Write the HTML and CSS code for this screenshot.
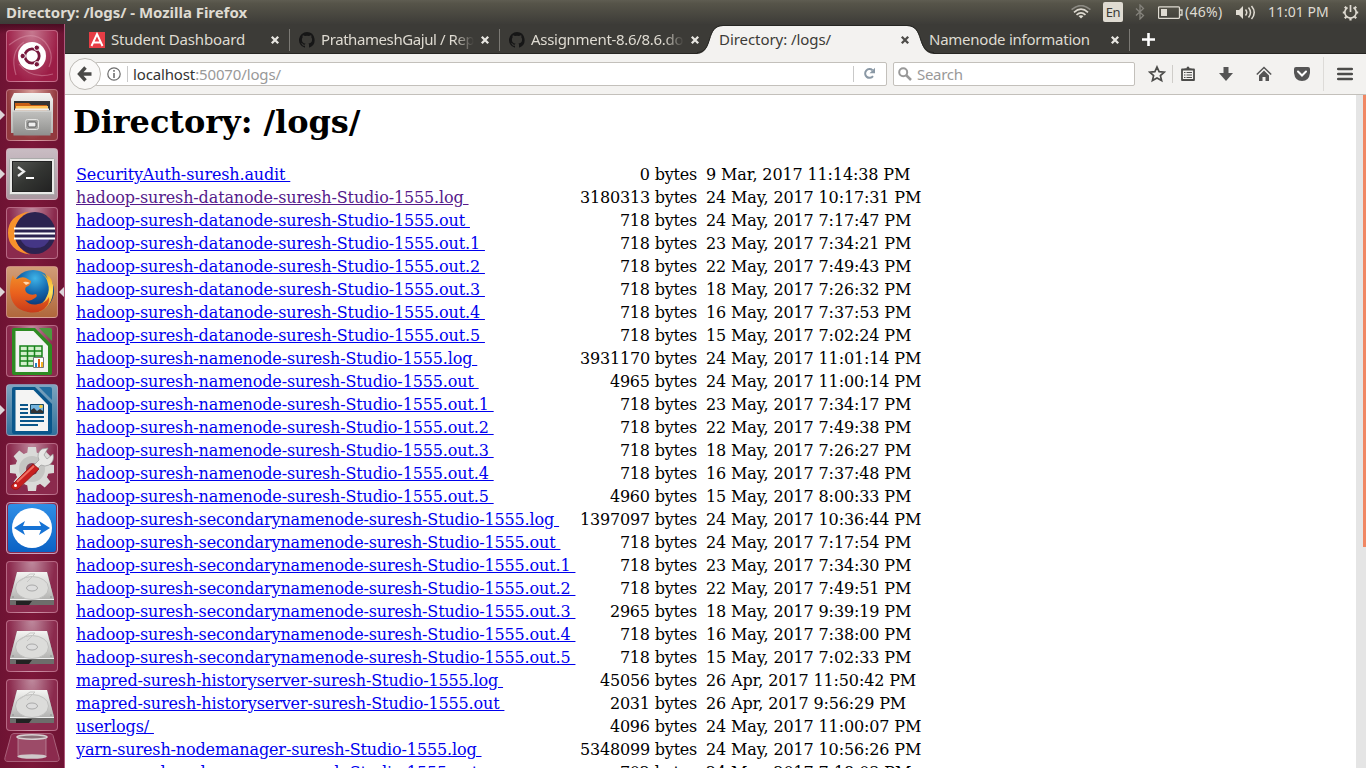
FILE: index.html
```html
<!DOCTYPE html>
<html lang="en">
<head>
<meta charset="utf-8">
<title>Directory: /logs/</title>
<link rel="stylesheet" href="styles.css">
</head>
<body>
<svg class="defs" width="0" height="0">
  <defs>
    <linearGradient id="metal" x1="0" y1="0" x2="0" y2="1"><stop offset="0" stop-color="#f4f4f2"/><stop offset="1" stop-color="#b4b4b2"/></linearGradient>
    <linearGradient id="plate" x1="0" y1="0" x2="0" y2="1"><stop offset="0" stop-color="#c2c2c0"/><stop offset="1" stop-color="#8f8f8d"/></linearGradient>
    <linearGradient id="dark" x1="0" y1="0" x2="1" y2="1"><stop offset="0" stop-color="#555753"/><stop offset=".5" stop-color="#333532"/><stop offset="1" stop-color="#222"/></linearGradient>
    <linearGradient id="blue" x1="0" y1="0" x2="0" y2="1"><stop offset="0" stop-color="#2f8ee6"/><stop offset="1" stop-color="#0b62c4"/></linearGradient>
    <radialGradient id="globe" cx=".55" cy=".2" r=".7"><stop offset="0" stop-color="#3fb4e8"/><stop offset=".5" stop-color="#1467ad"/><stop offset="1" stop-color="#0c2f6c"/></radialGradient>
    <linearGradient id="fox" x1="0" y1="0" x2="0" y2="1"><stop offset="0" stop-color="#f08c28"/><stop offset=".5" stop-color="#e9601d"/><stop offset="1" stop-color="#c73a1a"/></linearGradient>
    <linearGradient id="flame" x1="0" y1="0" x2="0" y2="1"><stop offset="0" stop-color="#f49b20"/><stop offset=".5" stop-color="#ffe45c"/><stop offset="1" stop-color="#ee8420"/></linearGradient>
    <symbol id="cat" viewBox="0 0 16 16"><path d="M8 0a8 8 0 0 0-2.500 15.600c.4.1.5-.2.5-.4v-1.500c-2.200.5-2.700-1-2.700-1-.4-.9-.9-1.200-.9-1.200-.7-.5.1-.5.1-.5.8.1 1.200.8 1.200.8.7 1.300 1.900.9 2.300.7.1-.5.3-.9.5-1.100-1.800-.2-3.600-.9-3.600-4 0-.9.3-1.600.8-2.100-.1-.2-.4-1 .1-2.100 0 0 .7-.2 2.200.8a7.500 7.500 0 0 1 4 0c1.500-1 2.200-.8 2.200-.8.4 1.100.2 1.900.1 2.100.5.600.8 1.300.8 2.100 0 3.100-1.900 3.700-3.700 3.900.3.300.6.800.6 1.500v2.200c0 .2.100.5.600.4A8 8 0 0 0 8 0z" fill="#161616"/></symbol>
    <symbol id="close" viewBox="0 0 10 10"><path d="M1.800 1.800l6.400 6.400M8.200 1.800L1.800 8.200" stroke="currentColor" stroke-width="2.300"/></symbol>
    <symbol id="disk" viewBox="0 0 52 52">
      <path d="M11 11H41L48 38V44H4V38z" fill="#777"/><path d="M11 11H41L48 38H4z" fill="url(#metal)"/>
      <path d="M4 38.500h44V44H4z" fill="#6d6d6b"/><path d="M10 40h16l-3 4H10z" fill="#222"/><path d="M4 38.500h44" stroke="#eee"/>
      <ellipse cx="26" cy="27" rx="16.500" ry="11.500" fill="#dcdcda" stroke="#b9b9b7" stroke-width=".8"/>
      <path d="M14 20l10-7h5l-8 8" fill="none" stroke="#c6c6c4"/><ellipse cx="26" cy="27" rx="5.500" ry="3" fill="#ddd" stroke="#aaa"/>
      <g fill="#888"><circle cx="7" cy="36" r=".8"/><circle cx="45" cy="36" r=".8"/></g>
    </symbol>
  </defs>
</svg>

<header class="panel">
  <span class="panel-title">Directory: /logs/ - Mozilla Firefox</span>
  <div class="indicators">
    <svg class="wifi" width="20" height="14" viewBox="0 0 20 14" fill="none" stroke="#dfdbd2"><path d="M.6 4.700Q10-3.500 19.400 4.700" stroke="#8b8982" stroke-width="1.600"/><path d="M3 7.300Q10 1 17 7.300" stroke-width="1.700"/><path d="M5.500 9.900Q10 5.800 14.500 9.900" stroke-width="1.700"/><path d="M7.500 11q2.500-1.500 5 0L10 13.500z" fill="#dfdbd2" stroke="none"/></svg>
    <span class="lang">En</span>
    <svg class="bt" width="10" height="16" viewBox="0 0 10 16"><path d="M1 4.500l7.500 7L5 15V1l3.500 3.500L1 11.500" fill="none" stroke="#85837c" stroke-width="1.300"/></svg>
    <svg class="battery" width="25" height="13" viewBox="0 0 25 13"><path d="M1.500 .8h19q1 0 1 1v9.500q0 1-1 1h-19q-1 0-1-1V1.800q0-1 1-1zM22 4h2v5h-2" fill="none" stroke="#dfdbd2" stroke-width="1.300"/><path d="M3 3h6v7H3z" fill="#dfdbd2"/></svg>
    <span class="percent">(46%)</span>
    <svg class="sound" width="21" height="15" viewBox="0 0 21 15"><path d="M1 5h3l4-4v13l-4-4H1z" fill="#dfdbd2"/><path d="M10.500 4.500q2.500 3 0 6M13.500 2.500q4 5 0 10M16.500 1q5.500 6.500 0 13" fill="none" stroke="#dfdbd2" stroke-width="1.500"/></svg>
    <span class="clock">11:01 PM</span>
    <svg class="power" width="17" height="17" viewBox="0 0 17 17" fill="none" stroke="#dfdbd2"><path d="M5.500 3.500a5.700 5.700 0 1 0 6 0" stroke-width="1.700"/><path d="M8.500 1v7" stroke-width="1.700"/><path d="M.8 8.500h2M14.200 8.500h2M8.500 14.200v2.200M2.800 14.200l1.500-1.500M14.200 14.200l-1.500-1.500M2.800 2.800l1.500 1.500M14.200 2.800l-1.500 1.500" stroke-width="2.200"/></svg>
  </div>
</header>

<div class="desktop">
  <aside class="launcher">
    <div class="tile dash"><svg viewBox="0 0 52 52"><g fill="none" stroke="#e2a0b4" stroke-opacity=".45" stroke-width="1.200"><path d="M3 15Q25-2 39 12Q49 24 43 37"/><path d="M10 45Q3 22 18 12"/><path d="M13 34Q25 50 47 44"/></g><circle cx="26" cy="26" r="14" fill="#fff"/><circle cx="26" cy="26" r="7.200" fill="none" stroke="#77173c" stroke-width="2.800"/><g fill="#77173c" stroke="#fff" stroke-width="1"><circle cx="16.700" cy="26" r="2.700"/><circle cx="30.800" cy="17.700" r="2.700"/><circle cx="30.800" cy="34.300" r="2.700"/></g></svg></div>
    <div class="tile files running"><svg viewBox="0 0 52 52"><path d="M8 4h36l3 6v34H5V10z" fill="url(#metal)"/><path d="M8 12h36v12H8z" fill="#333"/><path d="M9 14h14l2 2h16v8H9z" fill="#c95f14"/><path d="M10 17h32v3H10z" fill="#ffc45b"/><path d="M9 19.500h34v2H9z" fill="#eee"/><path d="M6.500 21.500h39l-1 25h-37z" fill="url(#plate)"/><path d="M6.500 22h39" stroke="#e0e0de"/><rect x="19.500" y="30.500" width="13" height="10" rx="2" fill="#a5a5a3" stroke="#e4e4e2"/><rect x="22" y="33" width="8" height="5" rx="1" fill="#eee" stroke="#555"/></svg></div>
    <div class="tile term running"><svg viewBox="0 0 52 52"><rect x="3.500" y="10.500" width="45" height="36" rx="1" fill="#e9e9e7" stroke="#aaa"/><rect x="6.500" y="13.500" width="39" height="30" fill="url(#dark)" stroke="#222"/><path d="M12 19l6 4.500-6 4.500" fill="none" stroke="#eee" stroke-width="2.200"/><path d="M20 30h8" stroke="#fff" stroke-width="2"/></svg></div>
    <div class="tile"><svg viewBox="0 0 52 52"><path d="M24 4.500Q2 8 2 26T24 47.500Q9 41 9 26T24 4.500z" fill="#f7922b"/><ellipse cx="29" cy="26" rx="20.500" ry="21" fill="#2c2350"/><path d="M14 31h30q-3 10-15 10T14 31z" fill="#443685"/><path d="M8 21.500h41M8 26.500h41M8 31.500h41" stroke="#fff" stroke-width="2.200"/></svg></div>
    <div class="tile firefox running active"><svg viewBox="0 0 52 52"><circle cx="27" cy="25" r="21" fill="url(#globe)"/><path d="M33 6q8 4 9 12 2 6-1 12-3 8-12 11l4 5q14-6 14-22Q48 12 39 8l3 5Q38 8 33 6z" fill="url(#flame)"/><path d="M7 9q1 4 4 4 5-3 9-1l5 3q0 4-5 6-2 3 1 6 4 3 9 1 2 2-1 4-5 4-10 2 5 6 13 4 8-1 11-7 1 7-5 12-7 5-16 3Q5 43 4 25 4 15 7 9z" fill="url(#fox)"/><path d="M17 16q4-1 7 1l-4 2z" fill="#ffd7ac"/></svg></div>
    <div class="tile"><svg viewBox="0 0 52 52"><path d="M8 3h21l17 17v28q0 2-2 2H8q-2 0-2-2V5q0-2 2-2z" fill="#2e8b22"/><path d="M33 3h11q2 0 2 2v11z" fill="#4c9a3f"/><path d="M9.500 6h18L42 21v26H9.500z" fill="#f4f4f3"/><path d="M14 21h22v20H14zM14 26h22M14 31h22M14 36h22M21.500 21v20M28.500 21v20" fill="#d3f0cc" stroke="#18831b" stroke-width="1.500"/><path d="M27.500 32.500h10v10h-10z" fill="#fff" stroke="#777"/><path d="M29 38h2v4h-2z" fill="#2583c5"/><path d="M32 34h2v8h-2z" fill="#e45b15"/><path d="M35 37h2v5h-2z" fill="#f5b223"/></svg></div>
    <div class="tile writer running"><svg viewBox="0 0 52 52"><path d="M8 3h21l17 17v28q0 2-2 2H8q-2 0-2-2V5q0-2 2-2z" fill="#09568b"/><path d="M33 3h11q2 0 2 2v11z" fill="#236e9f"/><path d="M9.500 6h18L42 21v26H9.500z" fill="#f4f4f3"/><path d="M14 21h8M14 25h8M14 29h8M14 33h24M14 37h24M14 41h18" stroke="#0b568a" stroke-width="2"/><path d="M24.500 20.500h13v9h-13z" fill="#72b4df" stroke="#124969"/><circle cx="35" cy="22.500" r="1.800" fill="#f5ce47"/><path d="M25 29v-3l3-2 3 3 3-2 3 2v2z" fill="#333"/></svg></div>
    <div class="tile"><svg viewBox="0 0 52 52"><g transform="translate(26 26)" fill="#dadad8"><circle r="17"/><path d="M-4-22h8l1 8H-5zM-4 22h8l1-8H-5z"/><path d="M-4-22h8l1 8H-5zM-4 22h8l1-8H-5z" transform="rotate(45)"/><path d="M-4-22h8l1 8H-5zM-4 22h8l1-8H-5z" transform="rotate(90)"/><path d="M-4-22h8l1 8H-5zM-4 22h8l1-8H-5z" transform="rotate(135)"/><circle r="13" fill="#c5c5c3"/><circle r="6" fill="#804056"/></g><path d="M28 22l5-5q-3-7 3-11l6-1-4 7 3 4 6-5q2 7-4 11-4 2-8 0l-4 4z" fill="#e7e7e5" stroke="#999" stroke-width=".7"/><path d="M27 21l6 5-21 20q-5 2-7-3z" fill="#c82020" stroke="#951414" stroke-width=".8"/><path d="M11 39l17-16" stroke="#f07063" stroke-width="1.800"/><circle cx="9.500" cy="42.500" r="1.500" fill="#fff"/></svg></div>
    <div class="tile viewer"><svg viewBox="0 0 52 52"><rect x="2" y="2" width="48" height="48" rx="3" fill="url(#blue)"/><circle cx="26" cy="26" r="20" fill="#fff"/><path d="M8 26l11-7-2 5h18l-2-5 11 7-11 7 2-5H17l2 5z" fill="#1673d5"/></svg></div>
    <div class="tile"><svg viewBox="0 0 52 52"><use href="#disk"/></svg></div>
    <div class="tile"><svg viewBox="0 0 52 52"><use href="#disk"/></svg></div>
    <div class="tile"><svg viewBox="0 0 52 52"><use href="#disk"/></svg></div>
    <svg class="trash" width="56" height="29" viewBox="0 0 56 29"><path d="M10 .5h36q2 0 3 2l6 22q1 4-3 4H4q-4 0-3-4L7 2.500q1-2 3-2z" fill="#8b2a4d" stroke="#a9607a"/><path d="M14 4h28v20H14z" fill="#a8627c" opacity=".6"/><path d="M14 4v20M42 4v20" stroke="#c295a5" opacity=".7"/><ellipse cx="28" cy="23.500" rx="14.500" ry="2.300" fill="#cfc9ca"/><ellipse cx="28" cy="4" rx="15" ry="2.200" fill="#8c7079" stroke="#d8d2d3" stroke-width="1.500"/></svg>
  </aside>

  <main class="browser">
    <nav class="tabs">
      <div class="tab"><svg class="fav" viewBox="0 0 16 16"><path d="M0 0h16v16H0z" fill="#e73d45"/><path d="M2.500 14L8 2l5.500 12M4.500 10.500h7" fill="none" stroke="#fff" stroke-width="1.900"/></svg><span class="label l1">Student Dashboard</span><svg class="x"><use href="#close"/></svg></div>
      <div class="tab"><svg class="fav"><use href="#cat"/></svg><span class="label fade l2">PrathameshGajul / Rep</span><svg class="x"><use href="#close"/></svg></div>
      <div class="tab plain"><svg class="fav"><use href="#cat"/></svg><span class="label fade l3">Assignment-8.6/8.6.do</span><svg class="x"><use href="#close"/></svg></div>
      <div class="tab selected"><svg class="shape" width="240" height="29" viewBox="0 0 240 29"><path d="M0 29C17 28 8 1 26 1H210C228 1 219 28 237 29z" fill="#f3f2f0"/><path d="M0 27.500C17 27.500 8 .5 26 .5H210C228 .5 219 27.500 237 27.500" fill="none" stroke="#252522"/></svg><span class="label l4">Directory: /logs/</span><svg class="x"><use href="#close"/></svg></div>
      <div class="tab"><span class="label l5">Namenode information</span><svg class="x"><use href="#close"/></svg></div>
      <svg class="plus" width="13" height="13" viewBox="0 0 13 13"><path d="M6.500 0v13M0 6.500h13" stroke="#fff" stroke-width="2.600"/></svg>
    </nav>
    <div class="toolbar">
      <div class="back"><svg width="16" height="16" viewBox="0 0 16 16"><path d="M8.500 1.500L2.500 8l6 6.500M3 8h11.500" fill="none" stroke="#4a4a48" stroke-width="3.400"/></svg></div>
      <div class="url">
        <svg class="info" width="14" height="14" viewBox="0 0 14 14"><circle cx="7" cy="7" r="6.200" fill="none" stroke="#6c6c6c" stroke-width="1.200"/><path d="M7 6v5M7 3v1.700" stroke="#666" stroke-width="1.500"/></svg>
        <span class="address"><b>localhost</b>:50070/logs/</span>
        <svg class="reload" width="13" height="13" viewBox="0 0 13 13"><path d="M10 9.200A4.400 4.400 0 1 1 9.500 3.200" fill="none" stroke="#8a98a5" stroke-width="2"/><path d="M12 .8v5.500H6.500z" fill="#8a98a5"/></svg>
      </div>
      <div class="search"><svg width="14" height="14" viewBox="0 0 14 14" fill="none" stroke="#999"><circle cx="5.200" cy="5.200" r="4" stroke-width="2"/><path d="M8 8l5 5" stroke-width="2.500"/></svg><span>Search</span></div>
      <div class="tools">
        <svg class="star" width="18" height="18" viewBox="0 0 18 18"><path d="M9 2l2.100 4.700 5.200.5-3.900 3.400 1.200 5L9 13l-4.600 2.600 1.200-5L1.700 7.200l5.200-.5z" fill="none" stroke="#4c4c4a" stroke-width="1.700"/></svg>
        <i class="rule"></i>
        <svg class="clip" width="16" height="16" viewBox="0 0 16 16"><path d="M2 3.500h12v10.500H2z" fill="none" stroke="#4c4c4a" stroke-width="1.800" stroke-linejoin="round"/><path d="M4.500 2.500h2q0-2 1.500-2t1.500 2h2V4h-7z" fill="#4c4c4a"/><path d="M4 6.500h1.500M4 9h1.500M4 11.500h1.500M6.500 6.500H12M6.500 9H12M6.500 11.500H12" stroke="#4c4c4a" stroke-width="1.200"/></svg>
        <svg class="down" width="16" height="16" viewBox="0 0 16 16"><path d="M5.500 1h5v6H15l-7 8-7-8h4.500z" fill="#555"/></svg>
        <svg class="home" width="16" height="16" viewBox="0 0 16 16"><path d="M.8 8.500L8 1.500l7.200 7" fill="none" stroke="#555" stroke-width="1.500"/><path d="M3 9.500l5-5 5 5V15H9.500v-4h-3v4H3z" fill="#555"/></svg>
        <svg class="pocket" width="16" height="16" viewBox="0 0 16 16"><path d="M2 1h12q2 0 2 2v4q-1 8-8 8T0 7V3q0-2 2-2z" fill="#555"/><path d="M4 5.500l4 4 4-4" fill="none" stroke="#fff" stroke-width="2" stroke-linecap="round"/></svg>
        <i class="rule tall"></i>
        <svg class="menu" width="16" height="14" viewBox="0 0 16 14"><path d="M1.200 2h13.600M1.200 7h13.600M1.200 12h13.600" stroke="#4c4c4a" stroke-width="2.600" stroke-linecap="round"/></svg>
      </div>
    </div>
    <div class="view">
      <div class="page">
        <h1>Directory: /logs/</h1>
        <table>
          <tr><td><a href="#">SecurityAuth-suresh.audit&nbsp;</a></td><td>0 bytes&nbsp;</td><td>9 Mar, 2017 11:14:38 PM</td></tr>
          <tr><td><a class="seen" href="#">hadoop-suresh-datanode-suresh-Studio-1555.log&nbsp;</a></td><td>3180313 bytes&nbsp;</td><td>24 May, 2017 10:17:31 PM</td></tr>
          <tr><td><a href="#">hadoop-suresh-datanode-suresh-Studio-1555.out&nbsp;</a></td><td>718 bytes&nbsp;</td><td>24 May, 2017 7:17:47 PM</td></tr>
          <tr><td><a href="#">hadoop-suresh-datanode-suresh-Studio-1555.out.1&nbsp;</a></td><td>718 bytes&nbsp;</td><td>23 May, 2017 7:34:21 PM</td></tr>
          <tr><td><a href="#">hadoop-suresh-datanode-suresh-Studio-1555.out.2&nbsp;</a></td><td>718 bytes&nbsp;</td><td>22 May, 2017 7:49:43 PM</td></tr>
          <tr><td><a href="#">hadoop-suresh-datanode-suresh-Studio-1555.out.3&nbsp;</a></td><td>718 bytes&nbsp;</td><td>18 May, 2017 7:26:32 PM</td></tr>
          <tr><td><a href="#">hadoop-suresh-datanode-suresh-Studio-1555.out.4&nbsp;</a></td><td>718 bytes&nbsp;</td><td>16 May, 2017 7:37:53 PM</td></tr>
          <tr><td><a href="#">hadoop-suresh-datanode-suresh-Studio-1555.out.5&nbsp;</a></td><td>718 bytes&nbsp;</td><td>15 May, 2017 7:02:24 PM</td></tr>
          <tr><td><a href="#">hadoop-suresh-namenode-suresh-Studio-1555.log&nbsp;</a></td><td>3931170 bytes&nbsp;</td><td>24 May, 2017 11:01:14 PM</td></tr>
          <tr><td><a href="#">hadoop-suresh-namenode-suresh-Studio-1555.out&nbsp;</a></td><td>4965 bytes&nbsp;</td><td>24 May, 2017 11:00:14 PM</td></tr>
          <tr><td><a href="#">hadoop-suresh-namenode-suresh-Studio-1555.out.1&nbsp;</a></td><td>718 bytes&nbsp;</td><td>23 May, 2017 7:34:17 PM</td></tr>
          <tr><td><a href="#">hadoop-suresh-namenode-suresh-Studio-1555.out.2&nbsp;</a></td><td>718 bytes&nbsp;</td><td>22 May, 2017 7:49:38 PM</td></tr>
          <tr><td><a href="#">hadoop-suresh-namenode-suresh-Studio-1555.out.3&nbsp;</a></td><td>718 bytes&nbsp;</td><td>18 May, 2017 7:26:27 PM</td></tr>
          <tr><td><a href="#">hadoop-suresh-namenode-suresh-Studio-1555.out.4&nbsp;</a></td><td>718 bytes&nbsp;</td><td>16 May, 2017 7:37:48 PM</td></tr>
          <tr><td><a href="#">hadoop-suresh-namenode-suresh-Studio-1555.out.5&nbsp;</a></td><td>4960 bytes&nbsp;</td><td>15 May, 2017 8:00:33 PM</td></tr>
          <tr><td><a href="#">hadoop-suresh-secondarynamenode-suresh-Studio-1555.log&nbsp;</a></td><td>1397097 bytes&nbsp;</td><td>24 May, 2017 10:36:44 PM</td></tr>
          <tr><td><a href="#">hadoop-suresh-secondarynamenode-suresh-Studio-1555.out&nbsp;</a></td><td>718 bytes&nbsp;</td><td>24 May, 2017 7:17:54 PM</td></tr>
          <tr><td><a href="#">hadoop-suresh-secondarynamenode-suresh-Studio-1555.out.1&nbsp;</a></td><td>718 bytes&nbsp;</td><td>23 May, 2017 7:34:30 PM</td></tr>
          <tr><td><a href="#">hadoop-suresh-secondarynamenode-suresh-Studio-1555.out.2&nbsp;</a></td><td>718 bytes&nbsp;</td><td>22 May, 2017 7:49:51 PM</td></tr>
          <tr><td><a href="#">hadoop-suresh-secondarynamenode-suresh-Studio-1555.out.3&nbsp;</a></td><td>2965 bytes&nbsp;</td><td>18 May, 2017 9:39:19 PM</td></tr>
          <tr><td><a href="#">hadoop-suresh-secondarynamenode-suresh-Studio-1555.out.4&nbsp;</a></td><td>718 bytes&nbsp;</td><td>16 May, 2017 7:38:00 PM</td></tr>
          <tr><td><a href="#">hadoop-suresh-secondarynamenode-suresh-Studio-1555.out.5&nbsp;</a></td><td>718 bytes&nbsp;</td><td>15 May, 2017 7:02:33 PM</td></tr>
          <tr><td><a href="#">mapred-suresh-historyserver-suresh-Studio-1555.log&nbsp;</a></td><td>45056 bytes&nbsp;</td><td>26 Apr, 2017 11:50:42 PM</td></tr>
          <tr><td><a href="#">mapred-suresh-historyserver-suresh-Studio-1555.out&nbsp;</a></td><td>2031 bytes&nbsp;</td><td>26 Apr, 2017 9:56:29 PM</td></tr>
          <tr><td><a href="#">userlogs/&nbsp;</a></td><td>4096 bytes&nbsp;</td><td>24 May, 2017 11:00:07 PM</td></tr>
          <tr><td><a href="#">yarn-suresh-nodemanager-suresh-Studio-1555.log&nbsp;</a></td><td>5348099 bytes&nbsp;</td><td>24 May, 2017 10:56:26 PM</td></tr>
          <tr><td><a href="#">yarn-suresh-nodemanager-suresh-Studio-1555.out&nbsp;</a></td><td>702 bytes&nbsp;</td><td>24 May, 2017 7:18:03 PM</td></tr>
        </table>
      </div>
      <div class="scrollbar"><div class="thumb"></div></div>
    </div>
  </main>
</div>
</body>
</html>
```
FILE: styles.css
```css
* { box-sizing: border-box; }
body { margin: 0; width: 1366px; height: 768px; overflow: hidden; font: 15px/20px "Noto Sans", "Open Sans", sans-serif; display: flex; flex-direction: column; background: #fff; }
svg { display: block; flex: none; }
.defs { position: absolute; }

.panel { height: 24px; flex: none; display: flex; align-items: center; justify-content: space-between; background: linear-gradient(#5f5d52, #565449 15%, #3d3c38); color: #dfdbd2; font-size: 14px; padding: 0 7px 0 6px; }
.panel-title { font-weight: 700; font-size: 15px; letter-spacing: -.04px; }
.indicators { display: flex; align-items: center; height: 24px; }
.lang { width: 20px; height: 20px; border-radius: 2px; background: #dfdbd2; color: #3c3b37; font-size: 13px; text-align: center; margin: 0 12px; letter-spacing: -.4px; }
.battery { margin-left: 13px; }
.percent { width: 38px; margin: 0 12px 0 2px; letter-spacing: .3px; white-space: nowrap; }
.clock { width: 61px; margin: 0 13px 0 12px; white-space: nowrap; letter-spacing: 0; }

.desktop { flex: 1; min-height: 0; display: flex; }
.launcher { width: 65px; flex: none; height: 744px; padding: 6px 0 0 6px; display: flex; flex-direction: column; gap: 7px; background: linear-gradient(#4a0c22, transparent 10px), linear-gradient(90deg, #6e1333, #7c1739 50%, #6e1333); border-right: 1px solid #b0587c; overflow: hidden; }
.tile { width: 52px; height: 52px; flex: none; position: relative; border-radius: 4px; border: 1px solid rgba(225, 165, 185, .5); background: radial-gradient(ellipse at 50% -5%, #c08da0, transparent 65%), #8b2a4d; }
.tile > svg { width: 52px; height: 52px; margin: -1px; }
.dash { background: radial-gradient(ellipse at 50% 0, #c67990, transparent 75%), #9c1d46; }
.files { background: radial-gradient(ellipse at 50% 0, #d9a19c, transparent 70%), #92393e; }
.term { background: linear-gradient(#c9bcc3, #a998a0); }
.firefox { background: linear-gradient(#d29d77, #b0683c); }
.writer { background: linear-gradient(#7ea5bf, #30719c); }
.viewer { border-color: #cba0bc; }
.running::before, .active::after { content: ""; position: absolute; top: 20px; border: 5px solid transparent; }
.running::before { left: -7px; border-left-color: #ddd5d8; border-right-width: 0; }
.active::after { right: -7px; border-right-color: #ddd5d8; border-left-width: 0; }
.trash { margin: -5px 0 0 -2px; }

.browser { flex: 1; min-width: 0; display: flex; flex-direction: column; }
.tabs { height: 30px; flex: none; display: flex; align-items: center; padding-left: 15px; background: #3c3b37; border-bottom: 1px solid #272623; color: #dfdbd2; }
.tab { width: 210px; height: 29px; display: flex; align-items: center; padding: 3px 10px 0 9px; position: relative; flex: none; background: linear-gradient(#7b7974, #7b7974) right 5px / 1px 22px no-repeat; }
.tab.plain, .tab.selected { background: none; }
.fav { width: 16px; height: 16px; margin-right: 6px; }
.label { flex: 1; min-width: 0; white-space: nowrap; position: relative; top: -1px; }
.fade { -webkit-mask-image: linear-gradient(90deg, #000 87%, transparent); mask-image: linear-gradient(90deg, #000 87%, transparent); margin-right: 6px; }
.l1 { letter-spacing: -.17px; }
.l2 { letter-spacing: -.42px; }
.l3 { letter-spacing: -.3px; }
.l4 { letter-spacing: -.06px; }
.l5 { letter-spacing: -.25px; }
.x { width: 10px; height: 10px; color: #e8e6e1; }
.shape { position: absolute; left: -13px; top: 1px; }
.selected { color: #3c3b37; z-index: 1; }
.selected .x { color: #4d4c49; position: relative; }
.plus { margin: 2px 0 0 12px; }

.toolbar { height: 41px; flex: none; display: flex; align-items: center; background: #f3f2f0; border-bottom: 1px solid #c3c0bb; padding: 0 13px 0 4px; }
.back { width: 32px; height: 32px; border: 1px solid #bdbab5; border-radius: 50%; background: #faf9f8; display: flex; align-items: center; justify-content: center; z-index: 1; }
.url { width: 792px; height: 24px; margin-left: -6px; background: #fff; border: 1px solid #c3c0bb; border-radius: 2px; display: flex; align-items: center; padding: 0 10px 0 11px; }
.address { border-left: 1px solid #c9c9c9; line-height: 16px; margin-left: 6px; padding-left: 5px; color: #999; flex: 1; letter-spacing: -.14px; }
.address b { font-weight: 400; color: #333; }
.reload { box-sizing: content-box; border-left: 1px solid #c9c9c9; padding: 1px 0 2px 9px; }
.search { width: 242px; height: 24px; margin-left: 6px; background: #fff; border: 1px solid #c3c0bb; border-radius: 2px; display: flex; align-items: center; gap: 5px; padding-left: 4px; color: #999; letter-spacing: -.3px; }
.tools { flex: 1; display: flex; align-items: center; height: 40px; padding-left: 13px; }
.rule { width: 1px; height: 18px; background: #cfcdc9; margin: 0 7px 0 6px; }
.rule.tall { height: 34px; margin: 0 13px; background: #dddbd8; }
.down { margin: 0 22px; }
.pocket { margin-left: 22px; }

.view { flex: 1; min-height: 0; display: flex; overflow: hidden; }
.page { flex: 1; padding: 8px 8px 0; font: 16px/21px "DejaVu Serif", serif; color: #000; overflow: hidden; }
h1 { font-size: 32px; line-height: 38px; margin: 0 0 21px; white-space: nowrap; letter-spacing: -.06px; }
table { border-spacing: 2px; table-layout: fixed; width: 902px; line-height: 21px; }
td { padding: 0 1px; height: 21px; white-space: nowrap; letter-spacing: -.13px; }
td:nth-child(1) { width: 502px; letter-spacing: -.138px; }
td:nth-child(2) { width: 124px; text-align: right; letter-spacing: -.2px; }
a { color: #0000ee; text-decoration: underline; }
.seen { color: #551a8b; }
.scrollbar { width: 10px; background: #e5e5e5; padding-left: 7px; }
.thumb { height: 452px; background: #f08763; }
```
